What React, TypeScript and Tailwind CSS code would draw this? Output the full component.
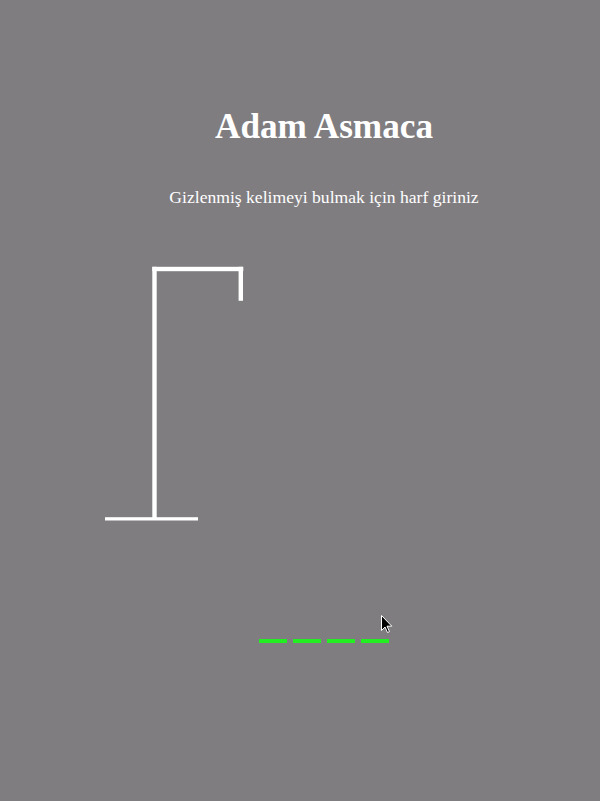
import React from "react";

export default function App() {
  const dashes = [0, 1, 2, 3];
  return (
    <div
      className="relative min-h-[801px] w-full bg-[#7f7d80] text-white pt-[107px]"
      style={{ fontFamily: '"Liberation Serif", "Times New Roman", serif' }}
    >
      <div className="ml-[48px] w-[552px] text-center">
        <h1 className="text-[35.2px] leading-[40px] font-bold">Adam Asmaca</h1>
        <p className="mt-[40px] text-[17.6px] leading-[20px]">
          Gizlenmiş kelimeyi bulmak için harf giriniz
        </p>
      </div>
      <svg
        className="mt-[53px] block"
        width="600"
        height="270"
        viewBox="0 260 600 270"
      >
        <rect x="152.3" y="266.8" width="4.4" height="252" fill="#fff" />
        <rect x="152.3" y="266.8" width="91" height="4.4" fill="#fff" />
        <rect x="238.6" y="266.8" width="4.4" height="34" fill="#fff" />
        <rect x="105" y="517.2" width="93" height="3.3" fill="#fff" />
      </svg>
      <div className="mt-[109px] ml-[259px] flex gap-[6px]">
        {dashes.map((d) => (
          <div key={d} className="h-[3.7px] w-[28px] bg-[#22ee22]" />
        ))}
      </div>
      <svg
        className="absolute left-[381px] top-[615px]"
        width="12"
        height="19"
        viewBox="0 0 12 19"
      >
        <path
          d="M0.5 0.5 L0.5 15.5 L4 12 L6.5 17.5 L8.5 16.6 L6 11.2 L10.8 11.2 Z"
          fill="#000"
          stroke="#fff"
          strokeWidth="1"
        />
      </svg>
    </div>
  );
}
